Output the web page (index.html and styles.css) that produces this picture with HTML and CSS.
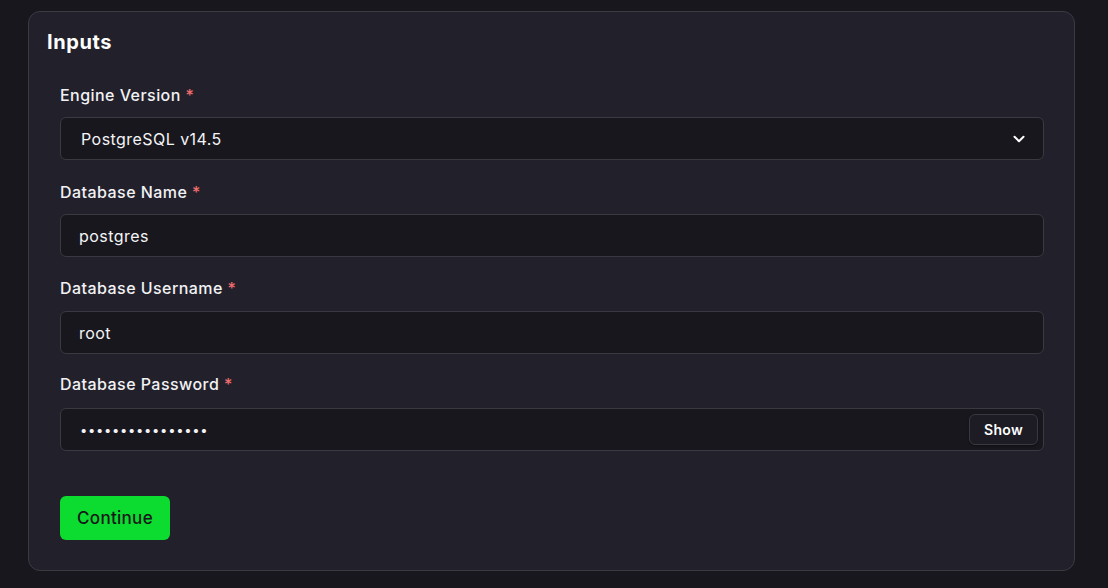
FILE: index.html
```html
<!DOCTYPE html>
<html>
<head>
<meta charset="utf-8">
<link rel="stylesheet" href="styles.css">
</head>
<body>
<div class="page">
  <section class="card">
    <h2 class="title">Inputs</h2>
    <form class="fields">
      <div class="field">
        <label class="label">Engine Version <span class="req">*</span></label>
        <div class="control select">
          <span class="value">PostgreSQL v14.5</span>
          <svg class="chevron" width="12" height="8" viewBox="0 0 12 8"><path d="M1.5 1.8 L6 6.2 L10.5 1.8" fill="none" stroke="#fff" stroke-width="2" stroke-linecap="round" stroke-linejoin="round"/></svg>
        </div>
      </div>
      <div class="field">
        <label class="label">Database Name <span class="req">*</span></label>
        <div class="control"><span class="value">postgres</span></div>
      </div>
      <div class="field">
        <label class="label">Database Username <span class="req">*</span></label>
        <div class="control"><span class="value">root</span></div>
      </div>
      <div class="field">
        <label class="label">Database Password <span class="req">*</span></label>
        <div class="control password">
          <span class="dots">••••••••••••••••</span>
          <button type="button" class="show">Show</button>
        </div>
      </div>
      <div class="actions">
        <button type="button" class="continue">Continue</button>
      </div>
    </form>
  </section>
</div>
</body>
</html>
```
FILE: styles.css
```css
* { box-sizing: border-box; }
html, body { margin: 0; padding: 0; }
body {
  background: #18171d;
  font-family: Inter, "Noto Sans", sans-serif;
  color: #f4f4f6;
  width: 1108px;
  height: 588px;
  overflow: hidden;
}
.page {
  padding: 11px 33px 0 28px;
}
.card {
  background: #22212b;
  border: 1px solid #3b3a43;
  border-radius: 12px;
  padding: 16px 18px 30px 18px;
}
.title {
  margin: 0;
  font-size: 20px;
  line-height: 28px;
  font-weight: 700;
  color: #ffffff;
  letter-spacing: 0.6px;
}
.fields {
  padding: 27px 12px 0 13px;
  display: flex;
  flex-direction: column;
  gap: 20px;
}
.field {
  display: flex;
  flex-direction: column;
  gap: 10px;
}
.label {
  font-size: 16px;
  line-height: 24px;
  font-weight: 500;
  color: #f2f2f4;
  letter-spacing: 0.45px;
}
.field:nth-child(3) .label, .field:nth-child(4) .label { margin-top: -1px; margin-bottom: 1px; }
.field:nth-child(4) .label { margin-top: -2px; margin-bottom: 2px; }
.req { color: #f46d6d; }
.control {
  height: 43px;
  background: #18171e;
  border: 1px solid #3a3942;
  border-radius: 6px;
  display: flex;
  align-items: center;
  padding: 0 18px 0 18px;
  font-size: 16px;
  color: #f4f4f6;
  letter-spacing: 0.45px;
}
.select { padding-left: 20px; justify-content: space-between; }
.password { padding-right: 5px; justify-content: space-between; }
.dots {
  font-size: 13px;
  letter-spacing: 0.7px;
  color: #f4f4f6;
  padding-left: 1px;
}
.show {
  height: 31px;
  width: 69px;
  background: #1d1c24;
  border: 1px solid #3a3942;
  border-radius: 6px;
  color: #ffffff;
  font-family: Inter, sans-serif;
  font-size: 14px;
  font-weight: 600;
  letter-spacing: 0.3px;
  box-shadow: 0 1px 2px rgba(0,0,0,0.4);
}
.actions { padding-top: 25px; }
.continue {
  width: 110px;
  height: 44px;
  background: #0bdc2f;
  border: none;
  border-radius: 6px;
  color: #16161a;
  font-family: Inter, sans-serif;
  font-size: 17px;
  font-weight: 500;
  letter-spacing: 0.3px;
}
```
